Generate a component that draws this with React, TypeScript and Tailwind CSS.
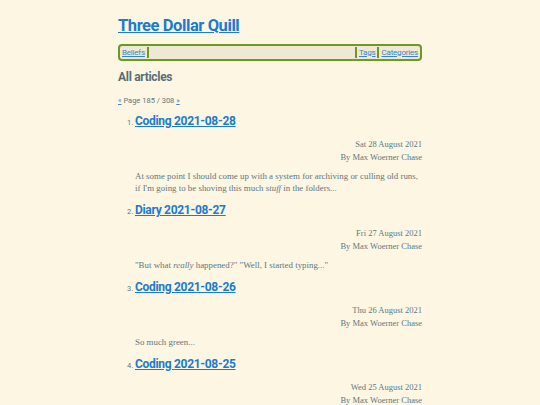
import React from 'react'

const articles = [
  {
    n: 1,
    title: 'Coding 2021-08-28',
    date: 'Sat 28 August 2021',
    excerpt: (
      <>
        At some point I should come up with a system for archiving or culling old runs, if I'm going to be shoving this much <em>stuff</em> in the folders...
      </>
    ),
  },
  {
    n: 2,
    title: 'Diary 2021-08-27',
    date: 'Fri 27 August 2021',
    excerpt: (
      <>
        "But what <em>really</em> happened?" "Well, I started typing..."
      </>
    ),
  },
  { n: 3, title: 'Coding 2021-08-26', date: 'Thu 26 August 2021', excerpt: <>So much green...</> },
  { n: 4, title: 'Coding 2021-08-25', date: 'Wed 25 August 2021', excerpt: <>More tests...</> },
]

const heading = { fontFamily: 'Roboto, "Liberation Sans", sans-serif' }
const body = { fontFamily: '"Liberation Serif", serif' }

const App: React.FC = () => {
  return (
    <div className="min-h-screen bg-[#fdf6e3] text-[#62777f]">
      <div className="mx-auto w-[304px] pt-[13px]">
        {/* Header */}
        <h1 className="text-[16.5px] font-bold leading-[26px] tracking-tight" style={heading}>
          <a href="#" className="text-[#1a7bd0] underline">Three Dollar Quill</a>
        </h1>

        {/* Nav */}
        <nav
          className="mt-[5px] flex h-[17px] items-center rounded-[4px] border-2 border-[#6b9a22] bg-[#eee8d5] px-[2px] text-[8px] tracking-tight"
          style={heading}
        >
          <a href="#" className="text-[#3a85c9] underline">Beliefs</a>
          <span className="ml-[2px] h-[11px] w-[2px] bg-[#6b9a22]" />
          <div className="flex-1" />
          <span className="mr-[2px] h-[11px] w-[2px] bg-[#6b9a22]" />
          <a href="#" className="text-[#3a85c9] underline">Tags</a>
          <span className="mx-[2px] h-[11px] w-[2px] bg-[#6b9a22]" />
          <a href="#" className="text-[#3a85c9] underline">Categories</a>
        </nav>

        <h2 className="mt-[7px] text-[12px] font-bold leading-[18px] tracking-tight text-[#586e75]" style={heading}>
          All articles
        </h2>

        <p className="mt-[9px] text-[7.5px] leading-[12px]" style={heading}>
          <a href="#" className="text-[#3a85c9] underline">«</a> Page 185 / 308{' '}
          <a href="#" className="text-[#3a85c9] underline">»</a>
        </p>

        {/* Articles */}
        <ol className="mt-[5px] pl-[17px]">
          {articles.map((a) => (
            <li key={a.n} className="mb-[7px]">
              <div className="flex items-baseline" style={heading}>
                <span className="-ml-[8px] w-[8px] text-[7.5px]">{a.n}.</span>
                <a href="#" className="text-[12px] font-bold leading-[18px] tracking-tight text-[#1a7bd0] underline">
                  {a.title}
                </a>
              </div>
              <div className="mt-[8px] text-right text-[8.5px] leading-[12.5px]" style={body}>
                <div>{a.date}</div>
                <div>By Max Woerner Chase</div>
              </div>
              <p className="mt-[7px] text-[8.9px] leading-[12px]" style={body}>
                {a.excerpt}
              </p>
            </li>
          ))}
        </ol>
      </div>
    </div>
  )
}

export default App
